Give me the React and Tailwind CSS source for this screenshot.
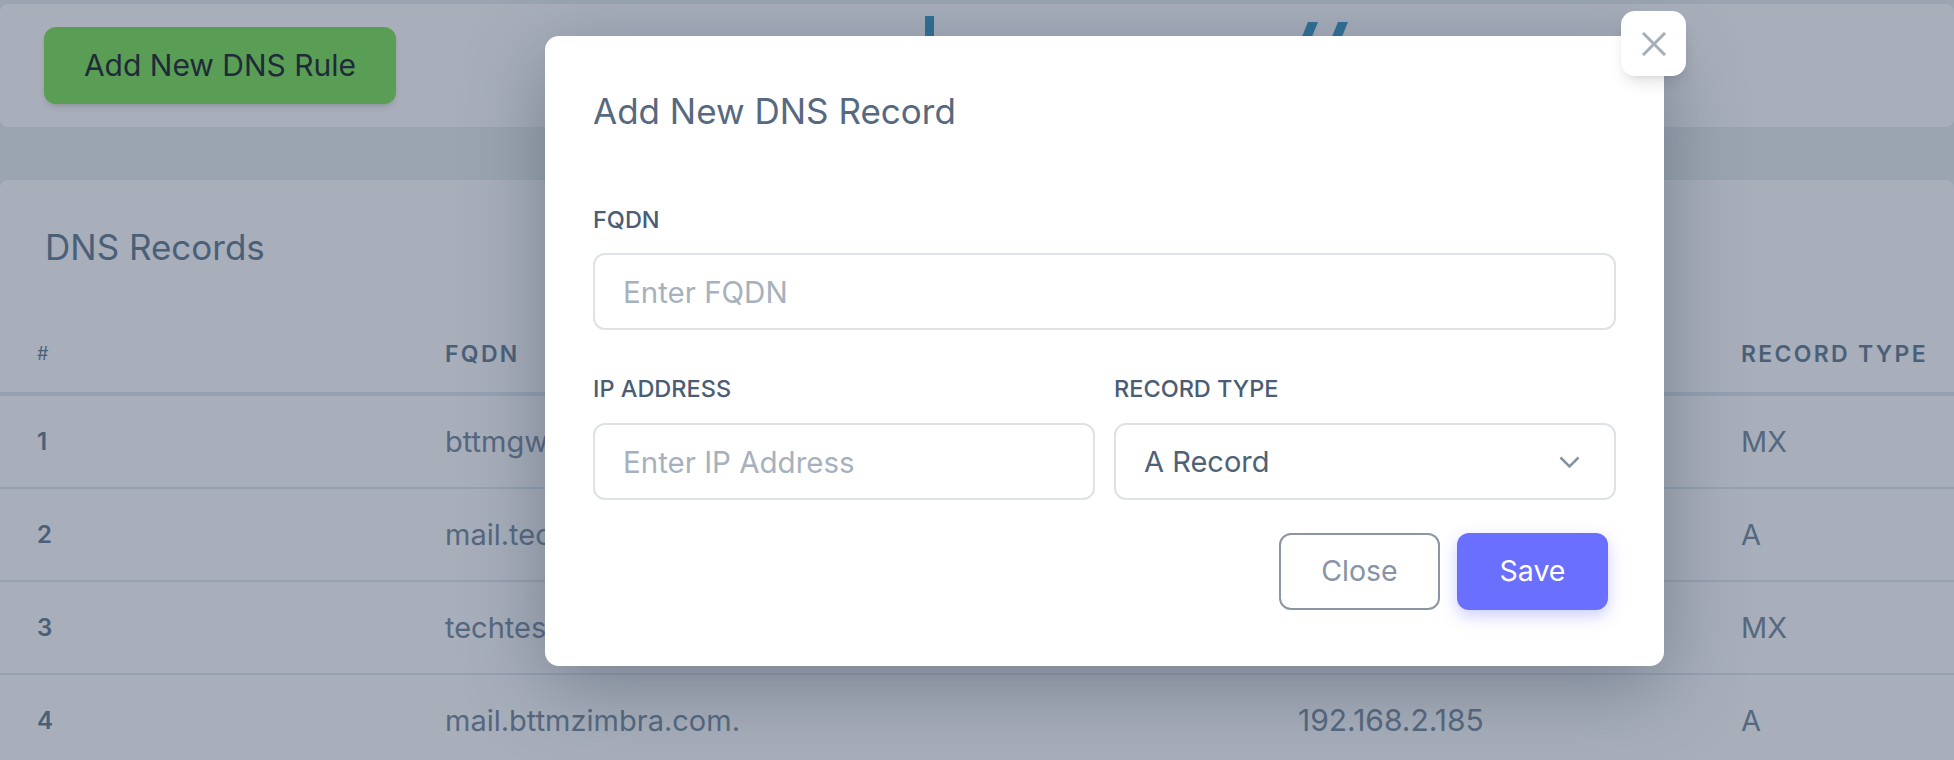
import { useState } from 'react';

const records = [
	{ id: 1, fqdn: 'bttmgw.bttmzimbra.com.', ip: '192.168.2.180', type: 'MX' },
	{ id: 2, fqdn: 'mail.techtest.com.', ip: '192.168.2.181', type: 'A' },
	{ id: 3, fqdn: 'techtest.com.', ip: '192.168.2.181', type: 'MX' },
	{ id: 4, fqdn: 'mail.bttmzimbra.com.', ip: '192.168.2.185', type: 'A' },
];

const App = () => {
	const [fqdn, setFqdn] = useState('');
	const [ip, setIp] = useState('');

	return (
		<div className="relative h-[760px] w-full overflow-hidden bg-[#9ba5b1] pt-1 font-['Inter',sans-serif]">
			{/* top bar */}
			<div className="flex items-start rounded-lg bg-[#a8afbb] py-[23px] pl-[44px]">
				<button className="h-[77px] w-[352px] rounded-xl bg-[#5a9e55] text-[30px] text-[#1f2a3a] shadow-md">
					Add New DNS Rule
				</button>
				<svg className="-mt-[11px] ml-[529px]" width="430" height="60" viewBox="0 0 430 60">
					<rect x="0" y="0" width="9" height="60" fill="#2e6f95" />
					<polygon points="383,6 393,6 371,60 361,60" fill="#2e6f95" />
					<polygon points="413,6 423,6 401,60 391,60" fill="#2e6f95" />
				</svg>
			</div>

			{/* records table */}
			<div className="mt-[53px] rounded-lg bg-[#a8afbb] pt-[47px]">
				<h2 className="mb-[49px] h-10 pl-[45px] text-[35px] leading-10 text-[#4a6079]">DNS Records</h2>
				<div className="grid grid-cols-[408px_853px_443px_1fr] border-b-4 border-[#95a1b0] py-6 text-[23px] font-semibold leading-7 tracking-[0.1em] text-[#4a6079]">
					<div className="pl-[37px] text-[18px] font-normal tracking-normal">#</div>
					<div className="pl-[37px]">FQDN</div>
					<div className="pl-[37px]">IP ADDRESS</div>
					<div className="pl-[37px]">RECORD TYPE</div>
				</div>
				{records.map((r) => (
					<div
						key={r.id}
						className="grid h-[93px] grid-cols-[408px_853px_443px_1fr] items-center border-b-2 border-[#95a1b0] text-[29px] text-[#55687f]">
						<div className="pl-[37px] text-[24px] font-semibold text-[#4a6079]">{r.id}</div>
						<div className="pl-[37px]">{r.fqdn}</div>
						<div className="pl-[37px] text-[30px]">{r.ip}</div>
						<div className="pl-[37px]">{r.type}</div>
					</div>
				))}
			</div>

			{/* modal */}
			<div className="absolute left-[545px] top-[36px] w-[1119px] rounded-[14px] bg-white px-12 pb-[56px] pt-[55px] shadow-[0_20px_80px_rgba(60,72,90,0.45)]">
				<button className="absolute -right-[22px] -top-[25px] flex h-[65px] w-[65px] items-center justify-center rounded-[14px] bg-white shadow-lg">
					<svg width="24" height="24" viewBox="0 0 24 24" stroke="#a3afbb" strokeWidth="3" strokeLinecap="square">
						<line x1="2" y1="2" x2="22" y2="22" />
						<line x1="22" y1="2" x2="2" y2="22" />
					</svg>
				</button>
				<h3 className="text-[35px] leading-10 text-[#56697f]">Add New DNS Record</h3>

				<label className="mt-[75px] block text-[23.5px] font-medium leading-7 text-[#4a5d74]">FQDN</label>
				<input
					type="text"
					value={fqdn}
					onChange={(e) => setFqdn(e.target.value)}
					placeholder="Enter FQDN"
					className="mt-[19px] block h-[77px] w-full rounded-xl border-2 border-[#dde2e8] px-7 text-[29.5px] text-[#4f6178] placeholder:text-[#a6b1bd] focus:outline-none"
				/>

				<div className="mt-[45px] grid grid-cols-2 gap-[19px]">
					<div>
						<label className="block text-[23.5px] font-medium leading-7 text-[#4a5d74]">IP ADDRESS</label>
						<input
							type="text"
							value={ip}
							onChange={(e) => setIp(e.target.value)}
							placeholder="Enter IP Address"
							className="mt-5 block h-[77px] w-full rounded-xl border-2 border-[#dde2e8] px-7 text-[29.5px] text-[#4f6178] placeholder:text-[#a6b1bd] focus:outline-none"
						/>
					</div>
					<div>
						<label className="block text-[23.5px] font-medium leading-7 text-[#4a5d74]">RECORD TYPE</label>
						<div className="mt-5 flex h-[77px] w-full items-center justify-between rounded-xl border-2 border-[#dde2e8] pl-7 pr-[34px] text-[29px] text-[#4f6178]">
							<span>A Record</span>
							<svg width="21" height="12" viewBox="0 0 21 12" fill="none" stroke="#8592a3" strokeWidth="2.5">
								<polyline points="1.5,1.5 10.5,10.5 19.5,1.5" />
							</svg>
						</div>
					</div>
				</div>

				<div className="mr-2 mt-[33px] flex justify-end gap-[17px]">
					<button className="h-[77px] w-[161px] rounded-xl border-2 border-[#8a96a5] text-[28.5px] text-[#8794a5]">
						Close
					</button>
					<button className="h-[77px] w-[151px] rounded-xl bg-[#6b6ffe] text-[28.5px] text-white shadow-[0_6px_16px_rgba(107,111,254,0.35)]">
						Save
					</button>
				</div>
			</div>
		</div>
	);
};

export default App;
